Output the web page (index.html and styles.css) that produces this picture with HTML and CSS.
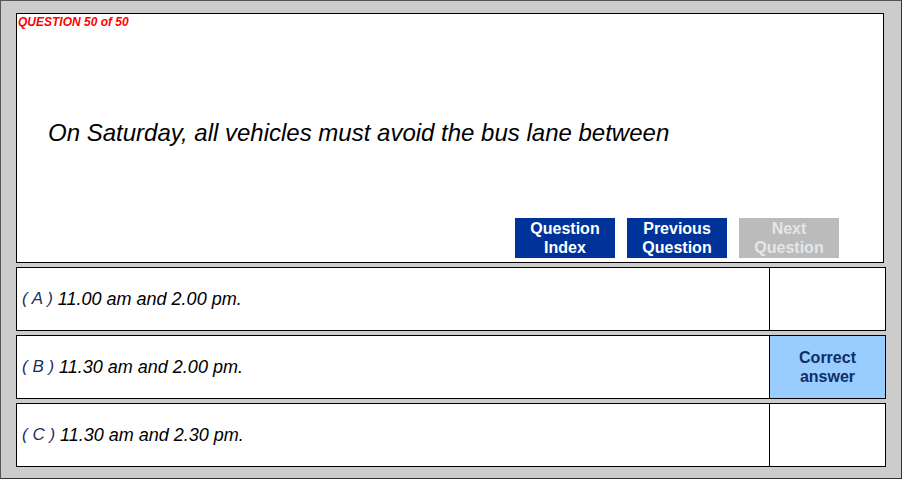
FILE: index.html
```html
<!DOCTYPE html>
<html lang="en">
<head>
    <meta charset="UTF-8">
    <title>Question 50 of 50</title>
    <link rel="stylesheet" href="styles.css">
</head>
<body>
    <div class="frame">
        <div class="question-box">
            <p class="counter">QUESTION 50 of 50</p>
            <p class="question">On Saturday, all vehicles must avoid the bus lane between</p>
            <div class="nav">
                <a href="#" class="btn">Question<br>Index</a>
                <a href="#" class="btn">Previous<br>Question</a>
                <span class="btn disabled">Next<br>Question</span>
            </div>
        </div>

        <!-- answers -->
        <div class="answer">
            <div class="answer-text"><span class="letter">( A )</span> 11.00 am and 2.00 pm.</div>
            <div class="answer-mark"></div>
        </div>
        <div class="answer">
            <div class="answer-text"><span class="letter">( B )</span> 11.30 am and 2.00 pm.</div>
            <div class="answer-mark correct">Correct<br>answer</div>
        </div>
        <div class="answer">
            <div class="answer-text"><span class="letter">( C )</span> 11.30 am and 2.30 pm.</div>
            <div class="answer-mark"></div>
        </div>
    </div>
</body>
</html>
```

FILE: styles.css
```css
body {
    margin: 0;
    font-family: "Liberation Sans", Arial, sans-serif;
    background-color: #fff;
}

.frame {
    box-sizing: border-box;
    width: 902px;
    height: 479px;
    background-color: #cccccc;
    border: 1px solid #555;
    border-right-color: #333;
    border-bottom-color: #333;
    padding: 12px 0 0 15px;
    display: flex;
    flex-direction: column;
    gap: 4px;
}

.question-box {
    box-sizing: border-box;
    width: 868px;
    height: 250px;
    background-color: white;
    border: 1px solid #000;
    display: flex;
    flex-direction: column;
}

.counter {
    margin: 2px 0 0 1px;
    color: #ff0000;
    font-size: 12px;
    font-weight: bold;
    font-style: italic;
    line-height: 13px;
}

.question {
    margin: 90px 0 0 31px;
    font-size: 24px;
    font-style: italic;
    color: #000;
    line-height: 28px;
}

.nav {
    margin-top: auto;
    margin-bottom: 4px;
    margin-right: 44px;
    display: flex;
    justify-content: flex-end;
    gap: 12px;
}

.btn {
    width: 100px;
    height: 40px;
    box-sizing: border-box;
    padding-top: 1px;
    background-color: #003399;
    color: white;
    font-size: 16px;
    font-weight: bold;
    line-height: 19px;
    text-align: center;
    text-decoration: none;
}

.btn.disabled {
    background-color: #bbbbbb;
    color: #e6e6e6;
}

.answer {
    box-sizing: border-box;
    width: 870px;
    height: 64px;
    background-color: white;
    border: 1px solid #000;
    display: flex;
}

.answer-text {
    flex: 1;
    display: flex;
    align-items: center;
    padding-left: 5px;
    font-size: 18px;
    font-style: italic;
    color: #000;
}

.letter {
    color: #1f2f5f;
    font-size: 17px;
    margin-right: 5px;
}

.answer-mark {
    width: 115px;
    border-left: 1px solid #000;
    display: flex;
    align-items: center;
    justify-content: center;
    text-align: center;
    font-size: 16px;
    font-weight: bold;
    line-height: 19px;
    color: #0f2f66;
}

.answer-mark.correct {
    background-color: #99ccff;
}
```
